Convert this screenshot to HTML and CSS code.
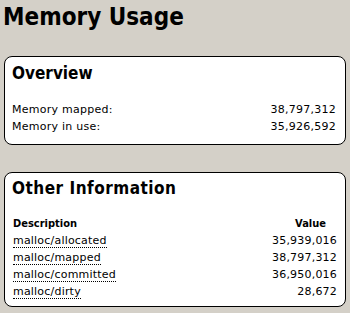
FILE: index.html
```html
<!DOCTYPE html>
<html>
<head>
<meta charset="utf-8">
<title>Memory Usage</title>
<link rel="stylesheet" href="styles.css">
</head>
<body>
<h1 class="title">Memory Usage</h1>
<section class="box overview">
  <h2 class="box-title">Overview</h2>
  <div class="kv-list">
    <div class="kv-row"><span>Memory mapped:</span><span>38,797,312</span></div>
    <div class="kv-row"><span>Memory in use:</span><span>35,926,592</span></div>
  </div>
</section>
<section class="box other">
  <h2 class="box-title wide">Other Information</h2>
  <table class="info-table">
    <thead>
      <tr><th class="desc">Description</th><th class="val">Value</th></tr>
    </thead>
    <tbody>
      <tr><td class="desc"><abbr title="malloc/allocated">malloc/allocated</abbr></td><td class="val">35,939,016</td></tr>
      <tr><td class="desc"><abbr title="malloc/mapped">malloc/mapped</abbr></td><td class="val">38,797,312</td></tr>
      <tr><td class="desc"><abbr title="malloc/committed">malloc/committed</abbr></td><td class="val">36,950,016</td></tr>
      <tr><td class="desc"><abbr title="malloc/dirty">malloc/dirty</abbr></td><td class="val">28,672</td></tr>
    </tbody>
  </table>
</section>
</body>
</html>
```
FILE: styles.css
```css
html, body {
  margin: 0;
  padding: 0;
}
body {
  background: #d4d0c8;
  color: #000;
  font-family: "DejaVu Sans", Verdana, sans-serif;
  font-size: 11px;
  padding: 3px 4px 0 4px;
}
.title,
.box-title,
.info-table th {
  font-family: "DejaVu Sans Condensed", "DejaVu Sans", Tahoma, sans-serif;
  font-stretch: condensed;
  font-weight: bold;
}
.title {
  margin: 0 0 25px -1px;
  font-size: 24px;
  line-height: 28px;
}
.box {
  background: #fff;
  border: 1px solid #000;
  border-radius: 8px;
}
.overview {
  padding: 6px 9px 9px 7px;
  margin-bottom: 27px;
}
.other {
  padding: 5px 7px 6px 7px;
}
.box-title {
  margin: 0;
  font-size: 17px;
  line-height: 20px;
}
.box-title.wide {
  letter-spacing: 0.5px;
}
.kv-list {
  margin-top: 18px;
  letter-spacing: 0.25px;
}
.kv-row {
  display: flex;
  justify-content: space-between;
  line-height: 17px;
}
.info-table {
  margin-top: 17px;
  width: 100%;
  border-collapse: collapse;
}
.info-table th,
.info-table td {
  padding: 0 0 0 1px;
  line-height: 17px;
  font-size: 11px;
}
.info-table td {
  letter-spacing: 0.2px;
}
.info-table .desc {
  text-align: left;
}
.info-table .val {
  text-align: right;
  padding-right: 1px;
}
.info-table th.val {
  padding-right: 12px;
}
abbr {
  text-decoration: none;
  border-bottom: 1px dotted #000;
}
```
